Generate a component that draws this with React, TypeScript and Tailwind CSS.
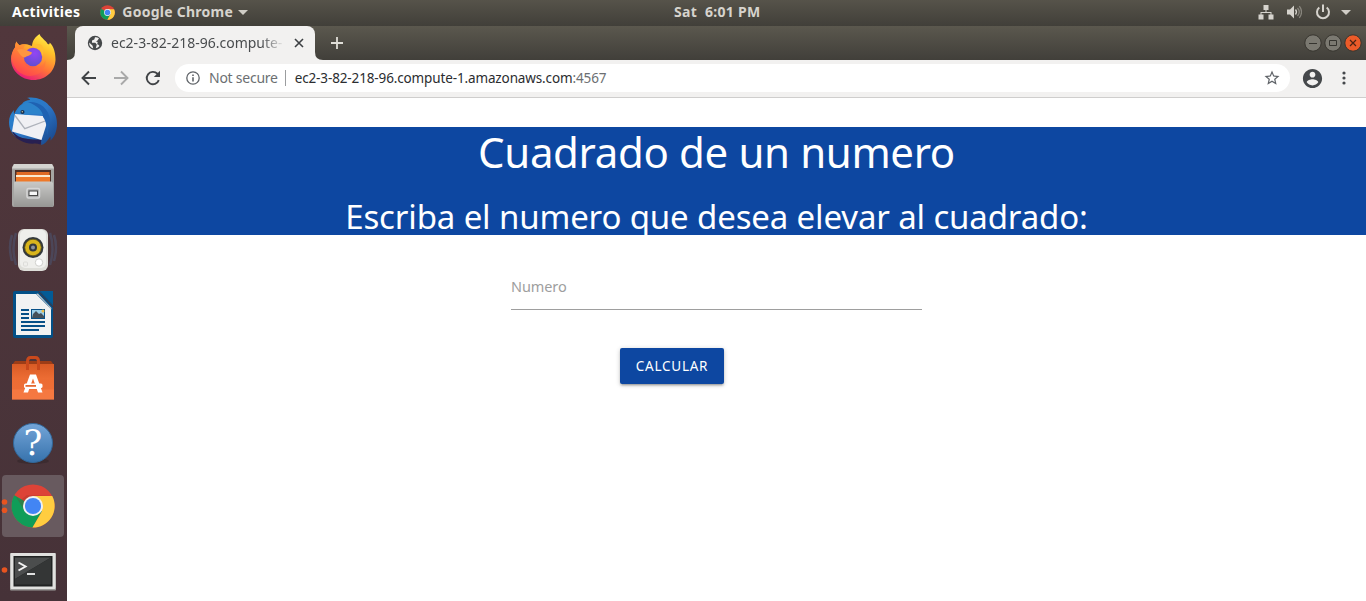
import type { ReactNode } from "react";

const font = "font-['Noto_Sans','Open_Sans',sans-serif]";

function ChromeLogo({ className, shade = true }: { className: string; shade?: boolean }) {
  return (
    <svg viewBox="0 0 48 48" className={className}>
      <circle cx="24" cy="24" r="23.5" fill="#dd4337" />
      <path d="M24 24 3.600 12.300A23.500 23.500 0 0 0 23.500 47.500L34 29.500Z" fill="#0f9d58" />
      <path d="M24 13.200H45A23.500 23.500 0 0 1 23.400 47.500L33.800 29.600Z" fill="#ffcd40" />
      {shade && <path d="M4.500 12.200 14.500 29l1.500-9 8-6.800h21.200l-21.200-.8H17L10 18Z" fill="#8c2a1c" opacity=".25" />}
      <circle cx="24" cy="24" r="10.900" fill="#f1f1f1" />
      <circle cx="24" cy="24" r="8.800" fill="#4285f4" />
    </svg>
  );
}

function Launch({ children, active = false, dots = 0 }: { children: ReactNode; active?: boolean; dots?: number }) {
  return (
    <div className="relative h-16 w-[67px] shrink-0">
      {active && <div className="absolute left-[2px] top-[1px] h-[62px] w-[62px] rounded-[4px] bg-[#685a5f]" />}
      <svg viewBox="0 0 67 64" className="relative h-16 w-[67px] overflow-visible">
        {dots === 1 && <circle cx="4.5" cy="32" r="2.800" fill="#e95420" />}
        {dots === 2 && (
          <g fill="#e95420">
            <circle cx="4.5" cy="28" r="2.800" />
            <circle cx="4.5" cy="36.300" r="2.800" />
          </g>
        )}
        {children}
      </svg>
    </div>
  );
}

function Launcher() {
  return (
    <aside className="flex w-[67px] shrink-0 flex-col overflow-hidden bg-linear-to-b from-[#51373c] to-[#463238]">
      <Launch>
        <defs>
          <linearGradient id="ff" x1=".8" y1="0" x2=".3" y2="1">
            <stop offset="0" stopColor="#fff44f" />
            <stop offset=".3" stopColor="#ffc02a" />
            <stop offset=".65" stopColor="#ff7139" />
            <stop offset="1" stopColor="#e8177c" />
          </linearGradient>
          <radialGradient id="ffg" cx=".6" cy=".3" r=".8">
            <stop offset="0" stopColor="#9345f5" />
            <stop offset="1" stopColor="#5b4fcb" />
          </radialGradient>
          <linearGradient id="ffl" x1=".8" y1="0" x2=".3" y2="1">
            <stop offset="0" stopColor="#ffb42e" />
            <stop offset=".5" stopColor="#ff7a38" />
            <stop offset="1" stopColor="#ff3f50" />
          </linearGradient>
        </defs>
        <path d="M39.500 8c1.500 4 6 6 8.200 10 1.500.800 1.800.200 2-1.600 4 3.500 6 10.600 5.800 17.600C55 45.500 45.500 54 33.500 54S11 45 11 33c0-4 1.500-8.500 4-11.500.2-2 .3-4 1.500-6 .7 1.700 1.700 3 3 3.700 2.500-1 5-1.300 7.500-.9L32 20c.3-5 3-9 7.500-12Z" fill="url(#ff)" />
        <path d="M11.500 31c.5-4 2-7.500 3.500-9.500.2-2 .3-4 1.500-6 .7 1.700 1.700 3 3 3.700 2.500-1 4-1.300 6.500-.9-1.500 1.700-2.500 3-2.500 4.700 5 2 7 2.500 8.500 4-1 3-4 3-7.500 5-2 4 1 9 6 10 7 1 13-2 15-8 1 8-4 15-15 16-10 0-18-8-19-19Z" fill="url(#ffl)" />
        <circle cx="33" cy="31" r="9.200" fill="url(#ffg)" />
        <path d="M17 24c5-2.500 9 0 15 2.500-1 3.500-4.500 3-7 5-3 0-5-3-8-7.500Z" fill="#ff9640" />
        <path d="M32 20.500c6-1 10 3.500 10 10 2-3 2-8 0-11-3-2-7-2-10 1Z" fill="#ffbd30" />
      </Launch>
      <Launch>
        <defs>
          <linearGradient id="tb" x1="0" y1="0" x2="1" y2="1">
            <stop offset="0" stopColor="#2385ce" />
            <stop offset=".5" stopColor="#2d76c6" />
            <stop offset="1" stopColor="#154084" />
          </linearGradient>
        </defs>
        <g transform="translate(0 1)">
          <path d="M22 13c2-3 5-4 8-4 0-1-1.500-1.700-3-2 8-1.500 17 1.500 22 7.500 4 3 8 10 8 18 .2 8-3 14-6.500 17 .3-2 .2-3-.2-4-3 5-6 8-9.300 8.500.5-2 .3-3-.5-4L16 46C11 42 9 37 9 31c0-5 2-9 5-12-.3 2-.2 3 .2 4 2-4 4.500-8 7.800-10Z" fill="url(#tb)" />
          <path d="M11.500 39c6 8 13 10 30 9.500l-1 5q-3-1-5-1c-11 1-21-4-24-13.500Z" fill="#282051" />
          <path d="M15 23 49 25.500 41.500 49 12 40.500Z" fill="#f0f0f4" />
          <path d="m15 24.500 9.800 13.200 23-8.700" fill="none" stroke="#aeb2bb" strokeWidth="1.300" />
          <path d="M18 20c1-4 4-7 8-8.500 9 0 18 4 20 14-6-2.500-10-3-17-2-4 .5-7 0-11-3.500Z" fill="#2c83cb" />
          <path d="M28 11c11-1 21 6 22 18l-3 16c0-10-1-15-4-19 0-6-5-11-15-15Z" fill="#1f62b2" />
          <circle cx="22.500" cy="21" r="2" fill="#19304f" />
          <circle cx="22.300" cy="20.700" r=".7" fill="#c7c9a2" />
        </g>
      </Launch>
      <Launch>
        <defs>
          <linearGradient id="fi" x1="0" y1="0" x2="0" y2="1">
            <stop offset="0" stopColor="#c9c9c7" />
            <stop offset="1" stopColor="#969694" />
          </linearGradient>
        </defs>
        <path d="M14 10h38l2 3v38q0 2-2 2H14q-2 0-2-2V13Z" fill="#a5a5a3" />
        <path d="M14 10h38l2 4.500H12Z" fill="#d4d4d1" />
        <rect x="15" y="16" width="36" height="13" fill="#4d3028" />
        <rect x="16.500" y="18" width="33" height="3" fill="#df6a24" />
        <rect x="16" y="21" width="34" height="2" fill="#fae9cf" />
        <rect x="16" y="23" width="34" height="5" fill="#ee7929" />
        <path d="M14.500 27.500h37L53 29v24H14V29Z" fill="url(#fi)" />
        <rect x="27" y="34.500" width="12.500" height="9.500" rx="1.500" fill="#aaa" stroke="#d6d6d6" strokeWidth="1.500" />
        <rect x="29" y="37" width="8.500" height="4.500" fill="#f8f8f8" stroke="#494949" strokeWidth="1" />
      </Launch>
      <Launch>
        <g fill="none" stroke="#4c6187" strokeWidth="2.500" opacity=".4">
          <path d="M16 15q-5 15 0 32M50 15q5 15 0 32M12 17q-4 12 0 26M54 17q4 12 0 26" />
        </g>
        <rect x="18" y="11" width="30" height="42" rx="6" fill="#deded9" />
        <rect x="20" y="12" width="26" height="38" rx="5" fill="#efefec" />
        <circle cx="33" cy="29.500" r="10.500" fill="#34393c" />
        <circle cx="33" cy="29.500" r="8.300" fill="#d9b51c" stroke="#60541a" strokeWidth=".8" />
        <circle cx="33" cy="29.500" r="4" fill="#34393c" />
        <circle cx="33" cy="29.500" r="2" fill="#8a919b" />
        <circle cx="39" cy="44.500" r="3.700" fill="#fff" stroke="#c5c5c1" strokeWidth=".8" />
        <rect x="23.500" y="44" width="4" height="4" rx="1" fill="none" stroke="#dcdcd9" />
      </Launch>
      <Launch>
        <g transform="translate(0 1)">
          <path d="M15 8h25l13 14v31q0 2-2 2H15q-2 0-2-2V10q0-2 2-2Z" fill="#035087" />
          <path d="M40 8h13v14Z" fill="#035b96" />
          <path d="M38.500 8.500 53 24" stroke="#4b3238" strokeWidth="1" />
          <path d="M16 11h20l15 15v26H16Z" fill="#f1f2f2" />
          <path d="m36 11 2-.500L51.500 25l-.5 2q-4-7-15-16Z" fill="#c3c9ce" />
          <path d="M21 26h8v2h-8zM21 30h8v2h-8zM21 34h8v2h-8zM21 38h24v2H21zM21 42h24v2H21zM21 46h18v2H21z" fill="#075087" />
          <rect x="31.500" y="26.500" width="13" height="9" fill="#99cee9" stroke="#075087" />
          <path d="m32 35 1-4 3-3 3 3 2-1 3 3v2Z" fill="#44505a" />
          <circle cx="43" cy="28" r="1.500" fill="#efbd45" />
        </g>
      </Launch>
      <Launch>
        <defs>
          <linearGradient id="sw" x1="0" y1="0" x2="0" y2="1">
            <stop offset="0" stopColor="#d95b25" />
            <stop offset=".4" stopColor="#ec6c33" />
            <stop offset="1" stopColor="#ee6f3a" />
          </linearGradient>
        </defs>
        <path d="m15 15-3 4h42l-3-4Z" fill="#9d3d17" />
        <path d="M12 18h42v35.500H12Z" fill="url(#sw)" />
        <path d="M12 43.500h42v10H12Z" fill="#fb8149" opacity=".55" />
        <path d="M27.500 24v-8.500q0-4 3-4h5q3 0 3 4V24" fill="none" stroke="#c9491c" strokeWidth="3" />
        <path d="M30 28.500h6l6.500 18h-4.500l-1.200-3.500h-7.600l-1.200 3.500h-4.500Zm3 4-2.500 7h5Z" fill="#fff" fillRule="evenodd" />
        <rect x="24" y="37.500" width="18.500" height="4.500" rx="1.500" fill="#fff" />
        <path d="M25.500 39H36v1.800H25.500z" fill="#e46a33" />
      </Launch>
      <Launch>
        <defs>
          <linearGradient id="hp" x1="0" y1="0" x2="0" y2="1">
            <stop offset="0" stopColor="#74a5d8" />
            <stop offset="1" stopColor="#3672ac" />
          </linearGradient>
        </defs>
        <ellipse cx="33" cy="51" rx="16" ry="3" fill="#302327" opacity=".5" />
        <circle cx="33" cy="33" r="19.500" fill="url(#hp)" stroke="#316799" />
        <text x="33" y="45" textAnchor="middle" fill="#fff" className="font-['DejaVu_Serif',serif] text-[35px]">?</text>
      </Launch>
      <Launch active dots={2}>
        <g transform="translate(11 10)">
          <ChromeLogo className="h-[44px] w-[44px]" />
        </g>
      </Launch>
      <Launch dots={1}>
        <rect x="10" y="15" width="46" height="37.500" rx="1" fill="#9b9b99" />
        <rect x="10.500" y="15" width="45" height="36" rx="1" fill="#e1e1df" />
        <rect x="13.500" y="18" width="39" height="30.500" fill="#202222" />
        <path d="M15 19.500h36L15 41Z" fill="#4b4d4d" />
        <path d="M15 41 51 19.500v27H15Z" fill="#343636" />
        <path d="m18.500 24.500 7 4-7 4" fill="none" stroke="#f3f3f3" strokeWidth="2" />
        <path d="M27 36h8" stroke="#f3f3f3" strokeWidth="1.800" />
      </Launch>
    </aside>
  );
}

function TopBar() {
  return (
    <header className="grid h-[26px] shrink-0 grid-cols-[674px_1fr_auto] items-center bg-linear-to-b from-[#56534a] to-[#413f39] pb-[2px] text-[14px] font-bold leading-5 text-[#d6d3cd]">
      <div className="flex items-center pl-3">
        <span className="tracking-[0.33px] text-white">Activities</span>
        <ChromeLogo shade={false} className="ml-[20px] h-[15px] w-[15px]" />
        <span className="ml-[7px] tracking-[0.25px]">Google Chrome</span>
        <svg viewBox="0 0 10 5" className="ml-[5px] h-[5px] w-[10px]" fill="#d0cdc6"><path d="M0 0h10L5 5z" /></svg>
      </div>
      <span className="justify-self-start whitespace-pre tracking-[0.3px]">Sat  6:01 PM</span>
      <div className="flex items-center pr-[15px]">
        <svg viewBox="0 0 16 16" className="h-4 w-4" fill="#d6d3cd">
          <path d="M5.500 1h5v5h-5zM.500 10.500h5v5h-5zM10.500 10.500h5v5h-5zM7.500 6h1v2.500h-1zM2.500 8h11v1h-11zM2.500 8h1v3h-1zM12.500 8h1v3h-1z" />
        </svg>
        <svg viewBox="0 0 16 16" className="ml-[12px] h-4 w-4" fill="none">
          <path d="M1 5.500h3l4-4v13l-4-4H1z" fill="#d6d3cd" />
          <path d="M9.500 5.500q2 2.500 0 5" stroke="#d6d3cd" strokeWidth="1.300" />
          <path d="M11.500 4q3.500 4 0 8M13.300 2.200q4.500 5.800 0 11.600" stroke="#88857d" strokeWidth="1.300" />
        </svg>
        <svg viewBox="0 0 16 16" className="ml-[13px] h-4 w-4" fill="none" stroke="#d6d3cd" strokeWidth="2">
          <path d="M4.300 3.500a6 6 0 1 0 7.400 0M8 .500V8" />
        </svg>
        <svg viewBox="0 0 10 5" className="ml-[10px] h-[5px] w-[10px]" fill="#d0cdc6"><path d="M0 0h10L5 5z" /></svg>
      </div>
    </header>
  );
}

function TabStrip() {
  return (
    <div className="flex h-[34px] shrink-0 items-start bg-linear-to-b from-[#5b584e] to-[#413f3a]">
      <svg viewBox="0 0 8 8" className="h-2 w-2 self-end" fill="#f2f1f0"><path d="M8 0v8H0q8 0 8-8Z" /></svg>
      <div className="flex h-[34px] w-60 items-center rounded-t-lg bg-[#f2f1f0] pl-3">
        <svg viewBox="0 0 16 16" className="h-4 w-4 shrink-0">
          <circle cx="8" cy="8" r="7.200" fill="#45484a" />
          <path d="M8 2.300 7.300 4.400 5 5.500v2.300h3.300l1.500 1.700-1 3.700Q11 13 12.500 11q-1-1.500-2.300-1.700L10.700 7 9 6.500l1.500-1L12 3.300Q10 2 8 2.300ZM2.200 7.500l3.400 3.200.600 2.800Q2 12 2.200 7.500Z" fill="#f2f1f0" />
        </svg>
        <span className="ml-2 w-[173px] whitespace-nowrap pb-px text-[14px] text-[#494c4e] [mask-image:linear-gradient(to_right,#000_87%,transparent)]">ec2-3-82-218-96.compute-</span>
        <svg viewBox="0 0 10 10" className="ml-[10px] h-[10px] w-[10px]" stroke="#3d4043" strokeWidth="1.600"><path d="m1 1 8 8M9 1 1 9" /></svg>
      </div>
      <svg viewBox="0 0 8 8" className="h-2 w-2 self-end" fill="#f2f1f0"><path d="M0 0v8h8Q0 8 0 0Z" /></svg>
      <svg viewBox="0 0 12 12" className="ml-2 mt-[11px] h-3 w-3" stroke="#e0ded8" strokeWidth="1.800"><path d="M0 6h12M6 0v12" /></svg>
      <div className="ml-auto mt-2 flex gap-[2px] pr-[4px]">
        {["min", "max", "close"].map((k) => (
          <svg key={k} viewBox="0 0 18 18" className="h-[18px] w-[18px]" fill="none">
            <circle cx="9" cy="9" r="8.200" fill={k === "close" ? "#ec5b29" : "#7b7971"} stroke="#37352f" />
            {k === "min" && <path d="M5 9.500h8" stroke="#35342f" />}
            {k === "max" && <path d="M5.500 6.500h7v5h-7z" stroke="#35342f" />}
            {k === "close" && <path d="m6 6 6 6M12 6l-6 6" stroke="#4a2314" strokeWidth="1.200" />}
          </svg>
        ))}
      </div>
    </div>
  );
}

function Toolbar() {
  return (
    <div className="flex h-[38px] shrink-0 items-center border-b border-[#cfcecd] bg-[#f2f1f0] pl-[14px] pb-px">
      <svg viewBox="0 0 16 16" className="h-4 w-4" fill="none" stroke="#414447" strokeWidth="1.900"><path d="M15 8H2M8 1.500 1.500 8 8 14.500" /></svg>
      <svg viewBox="0 0 16 16" className="ml-4 h-4 w-4" fill="none" stroke="#a9a9a9" strokeWidth="1.900"><path d="M1 8h13M8 1.500 14.500 8 8 14.500" /></svg>
      <svg viewBox="0 0 16 16" className="ml-4 h-4 w-4" fill="none" stroke="#414447" strokeWidth="1.900">
        <path d="M13.800 10.200A6.200 6.200 0 1 1 12.400 3.700L13.500 4.800" />
        <path d="M15 .800v6.200H8.800z" fill="#414447" stroke="none" />
      </svg>
      <div className="ml-[14px] flex h-7 w-[1115px] items-center rounded-full bg-white pl-[11px] text-[14px]">
        <svg viewBox="0 0 14 14" className="h-[14px] w-[14px]" fill="none" stroke="#5f6368" strokeWidth="1.300"><circle cx="7" cy="7" r="6.200" /><path d="M7 6.200v4.300M7 3.500V5" strokeWidth="1.600" /></svg>
        <span className="ml-[9px] pb-[2px] tracking-[-0.25px] text-[#6c6f72]">Not secure</span>
        <span className="ml-[7px] h-4 w-px bg-[#9b9d9f]" />
        <span className="ml-[9px] text-[13.500px] tracking-[-0.13px] text-[#2b2d30]">ec2-3-82-218-96.compute-1.amazonaws.com<span className="text-[#6c6f72]">:4567</span></span>
        <svg viewBox="0 0 24 24" className="ml-auto mr-[9px] h-[18px] w-[18px]" fill="#5f6368"><path d="M22 9.240l-7.190-.62L12 2 9.190 8.630 2 9.240l5.460 4.730L5.820 21 12 17.270 18.180 21l-1.630-7.030L22 9.240zM12 15.400l-3.760 2.270 1-4.280-3.320-2.880 4.380-.38L12 6.100l1.710 4.040 4.380.38-3.320 2.880 1 4.280L12 15.400z" /></svg>
      </div>
      <svg viewBox="0 0 24 24" className="ml-[11px] h-[23px] w-[23px]" fill="#45484b"><path d="M12 2C6.480 2 2 6.480 2 12s4.480 10 10 10 10-4.480 10-10S17.520 2 12 2zm0 3c1.660 0 3 1.340 3 3s-1.340 3-3 3-3-1.340-3-3 1.340-3 3-3zm0 14.200c-2.500 0-4.710-1.280-6-3.220.03-1.990 4-3.080 6-3.080 1.990 0 5.970 1.090 6 3.080-1.290 1.940-3.500 3.220-6 3.220z" /></svg>
      <svg viewBox="0 0 4 14" className="ml-[18px] h-[14px] w-1" fill="#45484b"><circle cx="2" cy="2" r="1.600" /><circle cx="2" cy="7" r="1.600" /><circle cx="2" cy="12" r="1.600" /></svg>
    </div>
  );
}

export default function App() {
  return (
    <div className={`flex h-[601px] w-[1366px] flex-col overflow-hidden bg-white ${font}`}>
      <TopBar />
      <div className="flex min-h-0 flex-1">
        <Launcher />
        <div className="flex min-w-0 flex-1 flex-col">
          <TabStrip />
          <Toolbar />
          <main className="flex flex-1 flex-col bg-white pt-[29px]">
            <div className="flex h-[108px] flex-col items-center bg-[#0d47a1] text-white">
              <h1 className="h-[50px] text-[42px] leading-[50px] tracking-[-0.35px]">Cuadrado de un numero</h1>
              <h2 className="mt-[21px] h-[37px] text-[33px] leading-[37px] tracking-[-0.14px]">Escriba el numero que desea elevar al cuadrado:</h2>
            </div>
            <form className="ml-[444px] flex w-[411px] flex-col">
              <label className="mt-[29px] flex h-[46px] items-start border-b border-[#9e9e9e] pt-[10px] text-[14.5px] leading-6 tracking-[-0.1px] text-[#9e9e9e]">Numero</label>
              <button type="button" className="ml-[109px] mt-[38px] h-9 w-[104px] rounded-[2px] bg-[#0d47a1] text-[13.500px] tracking-[0.75px] text-white shadow-[0_2px_2px_0_rgba(0,0,0,0.14),0_3px_1px_-2px_rgba(0,0,0,0.12),0_1px_5px_0_rgba(0,0,0,0.2)]">CALCULAR</button>
            </form>
          </main>
        </div>
      </div>
    </div>
  );
}
